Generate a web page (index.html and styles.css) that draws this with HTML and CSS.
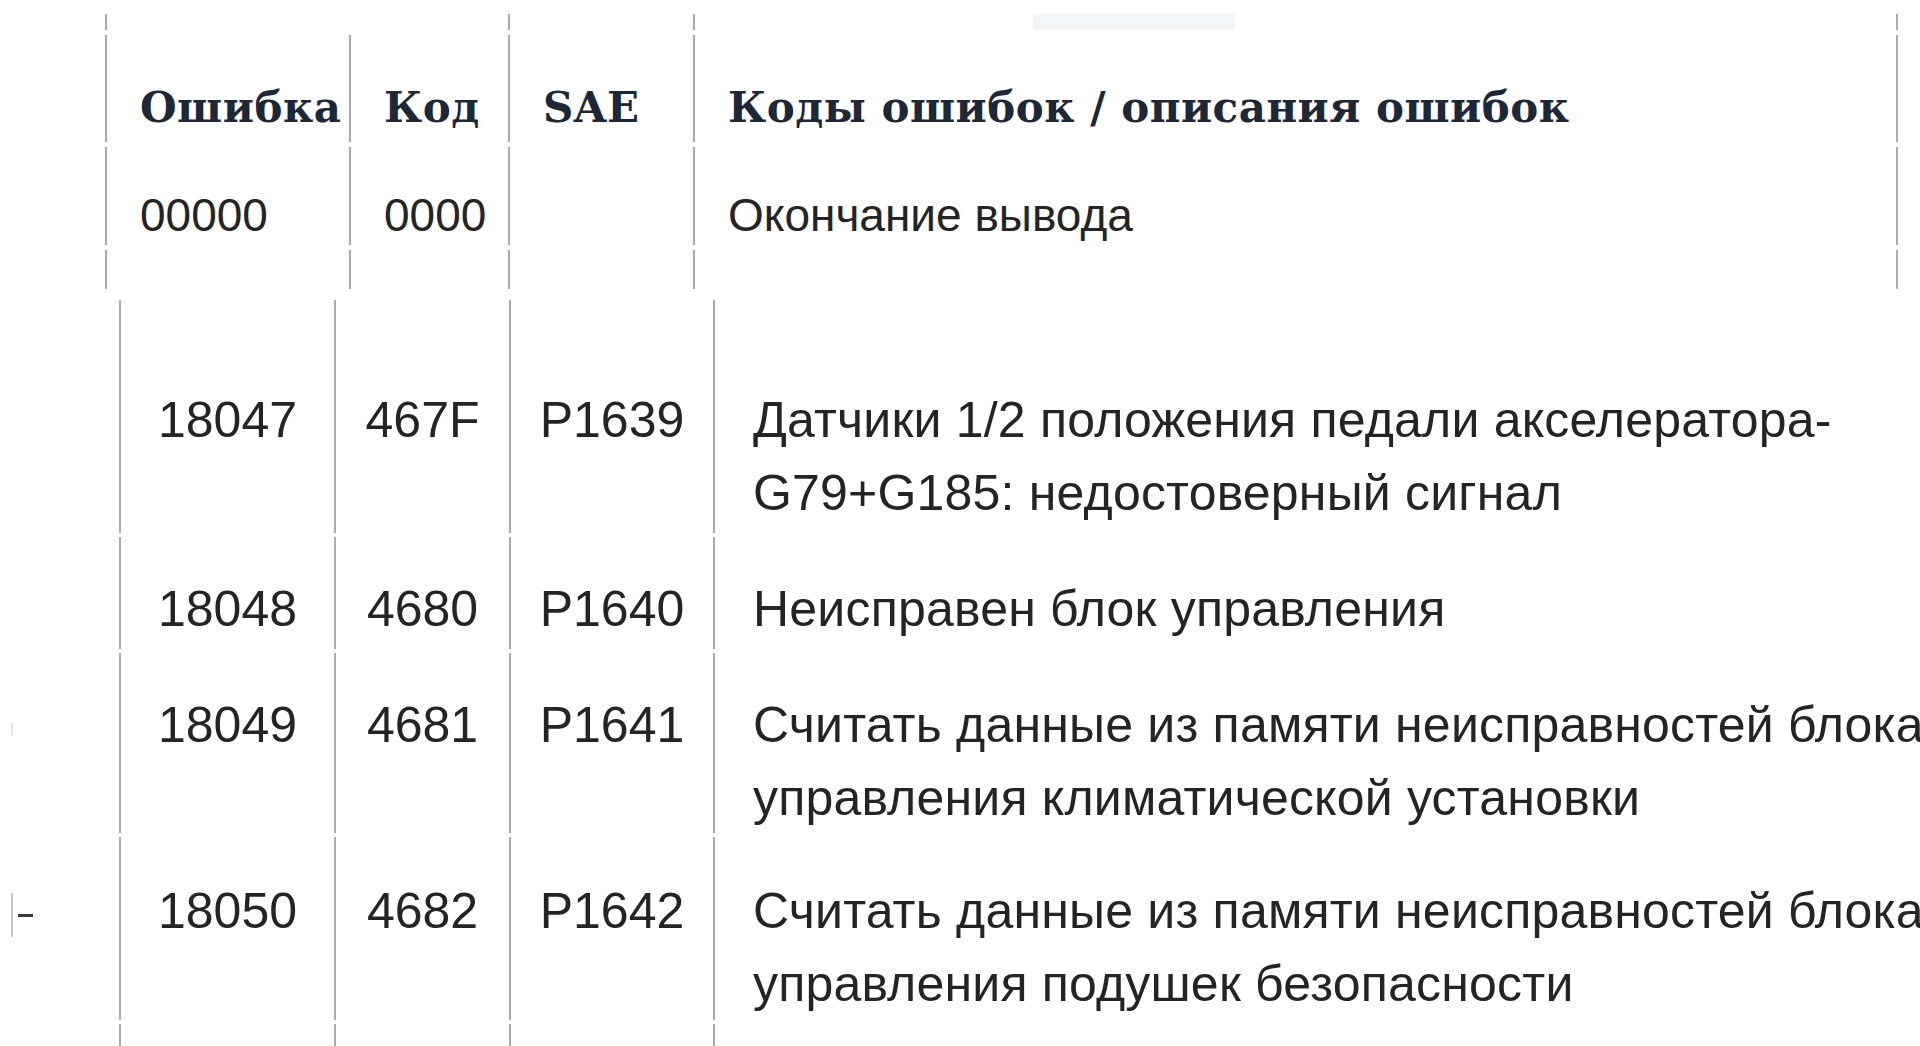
FILE: index.html
```html
<!DOCTYPE html>
<html lang="ru">
<head>
<meta charset="utf-8">
<title>Коды ошибок</title>
<link rel="stylesheet" href="styles.css">
</head>
<body>
<div class="sheet">
  <div class="top-table">
    <div class="cell span2 r0"></div>
    <div class="cell r0"></div>
    <div class="cell last r0"><div class="ghost-bar"></div></div>

    <div class="cell head">Ошибка</div>
    <div class="cell head">Код</div>
    <div class="cell head">SAE</div>
    <div class="cell head last">Коды ошибок / описания ошибок</div>

    <div class="cell data">00000</div>
    <div class="cell data">0000</div>
    <div class="cell data"></div>
    <div class="cell data last">Окончание вывода</div>

    <div class="cell r3"></div>
    <div class="cell r3"></div>
    <div class="cell r3"></div>
    <div class="cell r3 last"></div>
  </div>

  <div class="codes-table">
    <div class="gutter"></div>
    <div class="num first">18047</div>
    <div class="num first">467F</div>
    <div class="num first">P1639</div>
    <div class="desc first">Датчики 1/2 положения педали акселератора-<br>G79+G185: недостоверный сигнал</div>

    <div class="gutter"></div>
    <div class="num">18048</div>
    <div class="num">4680</div>
    <div class="num">P1640</div>
    <div class="desc">Неисправен блок управления</div>

    <div class="gutter"><span class="tick faint"></span></div>
    <div class="num">18049</div>
    <div class="num">4681</div>
    <div class="num">P1641</div>
    <div class="desc">Считать данные из памяти неисправностей блока<br>управления климатической установки</div>

    <div class="gutter"><span class="mark"><span class="mark-bar"></span><span class="mark-dash"></span></span></div>
    <div class="num low">18050</div>
    <div class="num low">4682</div>
    <div class="num low">P1642</div>
    <div class="desc low">Считать данные из памяти неисправностей блока<br>управления подушек безопасности</div>

    <div class="gutter"></div>
    <div class="num"></div>
    <div class="num"></div>
    <div class="num"></div>
    <div class="desc"></div>
  </div>
</div>
</body>
</html>
```
FILE: styles.css
```css
html, body {
  margin: 0;
  padding: 0;
  background: #ffffff;
}

body {
  width: 1920px;
  height: 1046px;
  overflow: hidden;
}

.sheet {
  padding-top: 14px;
}

/* ---------- top table ---------- */
.top-table {
  margin-left: 105px;
  display: grid;
  grid-template-columns: 244px 159px 185px 1205px;
  grid-template-rows: 16px 107px 98px 39px;
  row-gap: 5px;
}

.cell {
  border-left: 2px solid #ababab;
  box-sizing: border-box;
  padding-left: 33px;
  white-space: nowrap;
}

.cell.last {
  border-right: 2px solid #ababab;
}

.span2 {
  grid-column: span 2;
}

.ghost-bar {
  margin-left: 338px;
  width: 202px;
  height: 16px;
  background: #f3f6f8;
}

.cell.r0 {
  padding-left: 0;
}

.head {
  font-family: "DejaVu Serif", "Liberation Serif", serif;
  font-weight: bold;
  font-size: 42px;
  line-height: 50px;
  letter-spacing: 0.5px;
  color: #1c2738;
  padding-top: 48px;
}

.data {
  font-family: "Liberation Sans", Arial, sans-serif;
  font-size: 46px;
  line-height: 50px;
  color: #242424;
  padding-top: 43px;
}

/* ---------- codes table ---------- */
.codes-table {
  margin-top: 11px;
  display: grid;
  grid-template-columns: 119px 215px 175px 204px 1fr;
  grid-template-rows: 233px 112px 180px 183px 11px;
  row-gap: 4px;
  font-family: "Liberation Sans", Arial, sans-serif;
  font-size: 50px;
  line-height: 73px;
  color: #242424;
}

.num,
.desc {
  border-left: 2px solid #ababab;
  box-sizing: border-box;
  padding-top: 36px;
  white-space: nowrap;
}

.num {
  text-align: center;
}

.desc {
  padding-left: 38px;
  letter-spacing: 0.2px;
}

.num.first,
.desc.first {
  padding-top: 84px;
}

.num.low,
.desc.low {
  padding-top: 38px;
}

.gutter {
  position: relative;
}

.mark {
  display: flex;
  align-items: center;
  margin-top: 56px;
  margin-left: 11px;
}

.mark-bar {
  width: 2px;
  height: 44px;
  background: #c4c4c4;
}

.mark-dash {
  width: 15px;
  height: 3px;
  margin-left: 5px;
  background: #3a3a3a;
}

.tick.faint {
  display: block;
  width: 2px;
  height: 12px;
  margin-top: 70px;
  margin-left: 11px;
  background: #e4e4e4;
}
```
